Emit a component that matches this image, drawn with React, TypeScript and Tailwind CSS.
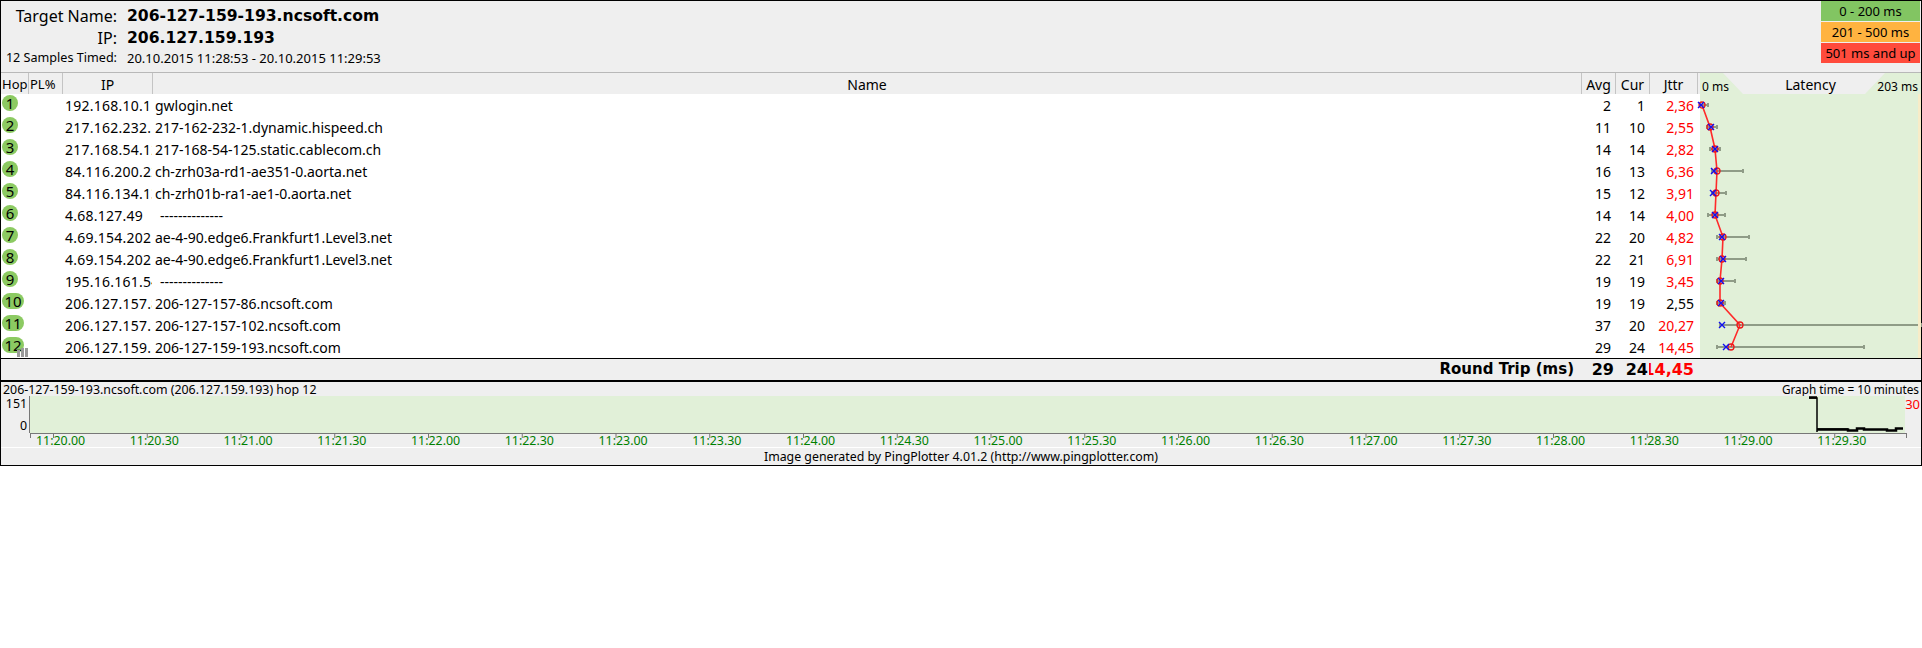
const font = "[font-family:'Noto_Sans',sans-serif]"

const hops = [
    { ip: '192.168.10.1', name: 'gwlogin.net', avg: 2, cur: 1, jit: '2,36', red: true },
    { ip: '217.162.232.1', name: '217-162-232-1.dynamic.hispeed.ch', avg: 11, cur: 10, jit: '2,55', red: true },
    { ip: '217.168.54.125', name: '217-168-54-125.static.cablecom.ch', avg: 14, cur: 14, jit: '2,82', red: true },
    { ip: '84.116.200.229', name: 'ch-zrh03a-rd1-ae351-0.aorta.net', avg: 16, cur: 13, jit: '6,36', red: true },
    { ip: '84.116.134.134', name: 'ch-zrh01b-ra1-ae1-0.aorta.net', avg: 15, cur: 12, jit: '3,91', red: true },
    { ip: '4.68.127.49', name: '--------------', avg: 14, cur: 14, jit: '4,00', red: true, blank: true },
    { ip: '4.69.154.202', name: 'ae-4-90.edge6.Frankfurt1.Level3.net', avg: 22, cur: 20, jit: '4,82', red: true },
    { ip: '4.69.154.202', name: 'ae-4-90.edge6.Frankfurt1.Level3.net', avg: 22, cur: 21, jit: '6,91', red: true },
    { ip: '195.16.161.54', name: '--------------', avg: 19, cur: 19, jit: '3,45', red: true, blank: true },
    { ip: '206.127.157.86', name: '206-127-157-86.ncsoft.com', avg: 19, cur: 19, jit: '2,55', red: false },
    { ip: '206.127.157.102', name: '206-127-157-102.ncsoft.com', avg: 37, cur: 20, jit: '20,27', red: true },
    { ip: '206.127.159.193', name: '206-127-159-193.ncsoft.com', avg: 29, cur: 24, jit: '14,45', red: true },
]

// x positions in the latency plot: avg marker, current marker, min, max
const plot = [
    [2, 1, 0, 8],
    [10, 11, 7, 17],
    [15, 15, 10, 20],
    [17, 14, 12, 43],
    [16, 13, 12, 26],
    [15, 15, 8, 25],
    [23, 22, 17, 49],
    [22, 23, 17, 46],
    [20, 21, 17, 35],
    [20, 21, 17, 25],
    [40, 22, 20, 221],
    [31, 26, 17, 164],
]

const times = [
    '11:20.00', '11:20.30', '11:21.00', '11:21.30', '11:22.00', '11:22.30', '11:23.00', '11:23.30', '11:24.00', '11:24.30',
    '11:25.00', '11:25.30', '11:26.00', '11:26.30', '11:27.00', '11:27.30', '11:28.00', '11:28.30', '11:29.00', '11:29.30',
]

function LatencyPlot() {
    const rowY = (i: number) => 11 + i * 22
    return (
        <svg width="218" height="264" className="overflow-visible shrink-0">
            {plot.map((p, i) => (
                <g key={i} stroke="#8f9c87" strokeWidth="2">
                    <line x1={p[2]} x2={p[3]} y1={rowY(i)} y2={rowY(i)} />
                    <line x1={p[2]} x2={p[2]} y1={rowY(i) - 2} y2={rowY(i) + 2} />
                    <line x1={p[3]} x2={p[3]} y1={rowY(i) - 2} y2={rowY(i) + 2} />
                </g>
            ))}
            <polyline
                points={plot.map((p, i) => `${p[0]},${rowY(i)}`).join(' ')}
                fill="none"
                stroke="#ff2a2a"
                strokeWidth="1.6"
            />
            {plot.map((p, i) => (
                <circle key={i} cx={p[0]} cy={rowY(i)} r="3" fill="none" stroke="#f01818" strokeWidth="1.3" />
            ))}
            {plot.map((p, i) => (
                <path
                    key={i}
                    d={`M${p[1] - 3} ${rowY(i) - 3}l6 6M${p[1] + 3} ${rowY(i) - 3}l-6 6`}
                    stroke="#1010f0"
                    strokeWidth="1.4"
                />
            ))}
        </svg>
    )
}

const App = () => {
    return (
        <div className={`w-[1922px] border border-black bg-[#efefef] text-[14px] leading-[22px] text-black ${font}`}>
            {/* Summary */}
            <div className="flex h-[72px] justify-between border-b border-[#b8b8b8]">
                <div className="flex">
                    <div className="w-[116px] text-right">
                        <div className="mt-[4px] text-[16px] leading-[22px]">Target Name:</div>
                        <div className="text-[16px] leading-[22px]">IP:</div>
                        <div className="mt-[1px] text-[12.6px] leading-[16px]">12 Samples Timed:</div>
                    </div>
                    <div className="ml-[10px]">
                        <div className="mt-[4px] text-[15.6px] font-bold leading-[22px] [font-family:'DejaVu_Sans',sans-serif]">206-127-159-193.ncsoft.com</div>
                        <div className="text-[15.6px] font-bold leading-[22px] [font-family:'DejaVu_Sans',sans-serif]">206.127.159.193</div>
                        <div className="mt-[1px] text-[13px] leading-[16px]">20.10.2015 11:28:53 - 20.10.2015 11:29:53</div>
                    </div>
                </div>
                <div className="mr-[1px] flex w-[99px] flex-col gap-[1px] text-center text-[13px] leading-[20px]">
                    <div className="h-[20px] bg-[#82c562]">0 - 200 ms</div>
                    <div className="h-[20px] bg-[#ffb340]">201 - 500 ms</div>
                    <div className="h-[20px] bg-[#ff4b3c]">501 ms and up</div>
                </div>
            </div>

            {/* Column headers */}
            <div className="flex h-[21px] leading-[23px]">
                <div className="w-[28px] border-r border-[#c4c4c4] pl-[1px] text-[13px]">Hop</div>
                <div className="w-[34px] border-r border-[#c4c4c4] pl-[1px] text-[13px]">PL%</div>
                <div className="w-[90px] border-r border-[#c4c4c4] text-center">IP</div>
                <div className="flex-1 border-r border-[#c4c4c4] text-center">Name</div>
                <div className="w-[34px] border-r border-[#c4c4c4] text-center">Avg</div>
                <div className="w-[34px] border-r border-[#c4c4c4] text-center">Cur</div>
                <div className="w-[48px] border-r border-[#c4c4c4] text-center">Jttr</div>
                <div className="w-[2px]" />
                <div className="relative w-[221px] text-center">
                    <svg width="221" height="21" className="absolute left-0 top-0">
                        <polygon points="0,0 23,0 43,21 0,21" fill="#e1f0d8" />
                        <polygon points="185,0 221,0 221,21 165,21" fill="#e1f0d8" />
                    </svg>
                    <span className="absolute left-[2px] top-[4px] text-[12px] leading-[20px]">0 ms</span>
                    <span className="relative">Latency</span>
                    <span className="absolute right-[3px] top-[4px] text-[12px] leading-[20px]">203 ms</span>
                </div>
            </div>

            {/* Hops */}
            <div className="flex h-[265px] border-b border-black bg-white">
                <div className="flex-1 leading-[24px]">
                    {hops.map((h, i) => (
                        <div key={i} className="flex h-[22px]">
                            <div className="relative w-[29px]">
                                <div
                                    className={`mt-[1px] ml-[1px] flex h-[16px] items-center justify-center rounded-full bg-[#8cca62] text-[15px] leading-[16px] ${
                                        i > 8 ? 'w-[22px]' : 'w-[16px]'
                                    }`}
                                >
                                    {i + 1}
                                </div>
                                {i === 11 && (
                                    <div className="absolute bottom-[1px] left-[16px] flex h-[9px] items-end gap-[1px]">
                                        <span className="h-[7px] w-[3px] bg-[#9a9a9a]" />
                                        <span className="h-[9px] w-[3px] bg-[#9a9a9a]" />
                                        <span className="h-[9px] w-[3px] bg-[#9a9a9a]" />
                                    </div>
                                )}
                            </div>
                            <div className="w-[34px]" />
                            <div className="mr-[2px] w-[88px] overflow-hidden whitespace-nowrap pl-[1px] tracking-[0.25px]">{h.ip}</div>
                            <div className={`flex-1 whitespace-nowrap ${h.blank ? 'pl-[6px]' : 'pl-[1px]'}`}>{h.name}</div>
                            <div className="w-[34px] pr-[4px] text-right">{h.avg}</div>
                            <div className="w-[34px] pr-[4px] text-right">{h.cur}</div>
                            <div className={`w-[48px] pr-[3px] text-right ${h.red ? 'text-[#ff0000]' : ''}`}>{h.jit}</div>
                        </div>
                    ))}
                </div>
                <div className="w-[3px]" />
                <div className="w-[218px] shrink-0 bg-[#e1f0d8]">
                    <LatencyPlot />
                </div>
                <div className="w-[3px] bg-[#f8ecc8]" />
            </div>

            {/* Round trip */}
            <div className="flex h-[23px] items-center border-b-2 border-black font-bold leading-[21px] [font-family:'DejaVu_Sans',sans-serif]">
                <div className="flex-1 pr-[7px] text-right text-[15px]">Round Trip (ms)</div>
                <div className="w-[34px] pr-[1px] text-right text-[16px]">29</div>
                <div className="w-[34px] pr-[1px] text-right text-[16px]">24</div>
                <div className="w-[48px] overflow-hidden whitespace-nowrap pr-[3px] text-right text-[16px] text-[#ff0000]" dir="rtl">14,45</div>
                <div className="w-[224px]" />
            </div>

            {/* Time graph */}
            <div className="flex h-[14px] justify-between px-[2px] leading-[15px]">
                <span className="text-[12.4px]">206-127-159-193.ncsoft.com (206.127.159.193) hop 12</span>
                <span className="text-[11.8px]">Graph time = 10 minutes</span>
            </div>
            <div className="flex h-[37px]">
                <div className="flex w-[30px] flex-col justify-between border-r border-[#777] pr-[2px] pt-[1px] text-right text-[12.4px] leading-[14px]">
                    <span>151</span>
                    <span>0</span>
                </div>
                <div className="w-[1875px] bg-[#e1f0d8]">
                    <svg width="1875" height="37">
                        <path d="M1779 2h8v34M1787 33h31" fill="none" stroke="#000" strokeWidth="1.5" />
                        <path d="M1779 1.5h8M1787 33.5h31l0 1h9v-2h7v1h23v1h9v-2h7" fill="none" stroke="#000" strokeWidth="2.5" />
                    </svg>
                </div>
                <div className="flex-1 pr-[1px] text-right text-[13px] leading-[16px] text-[#ff0000]">30</div>
            </div>
            <svg width="1920" height="5" className="block">
                <line x1="29" x2="1906" y1="0.5" y2="0.5" stroke="#777" />
                {times.map((_, i) => (
                    <line key={i} x1={52.5 + i * 93.75} x2={52.5 + i * 93.75} y1="0" y2="5" stroke="#777" />
                ))}
                <line x1="29.5" x2="29.5" y1="0" y2="5" stroke="#777" />
                <line x1="1905.5" x2="1905.5" y1="0" y2="5" stroke="#777" />
            </svg>
            <div className="-mt-[4px] flex h-[14px] border-b border-white pl-[35px] text-[12.4px] leading-[14px] text-[#008000]">
                {times.map((t) => (
                    <span key={t} className="w-[93.75px] shrink-0">{t}</span>
                ))}
            </div>
            <div className="h-[17px] text-center text-[12.35px] leading-[17px]">Image generated by PingPlotter 4.01.2 (http://www.pingplotter.com)</div>
        </div>
    )
}

export default App
